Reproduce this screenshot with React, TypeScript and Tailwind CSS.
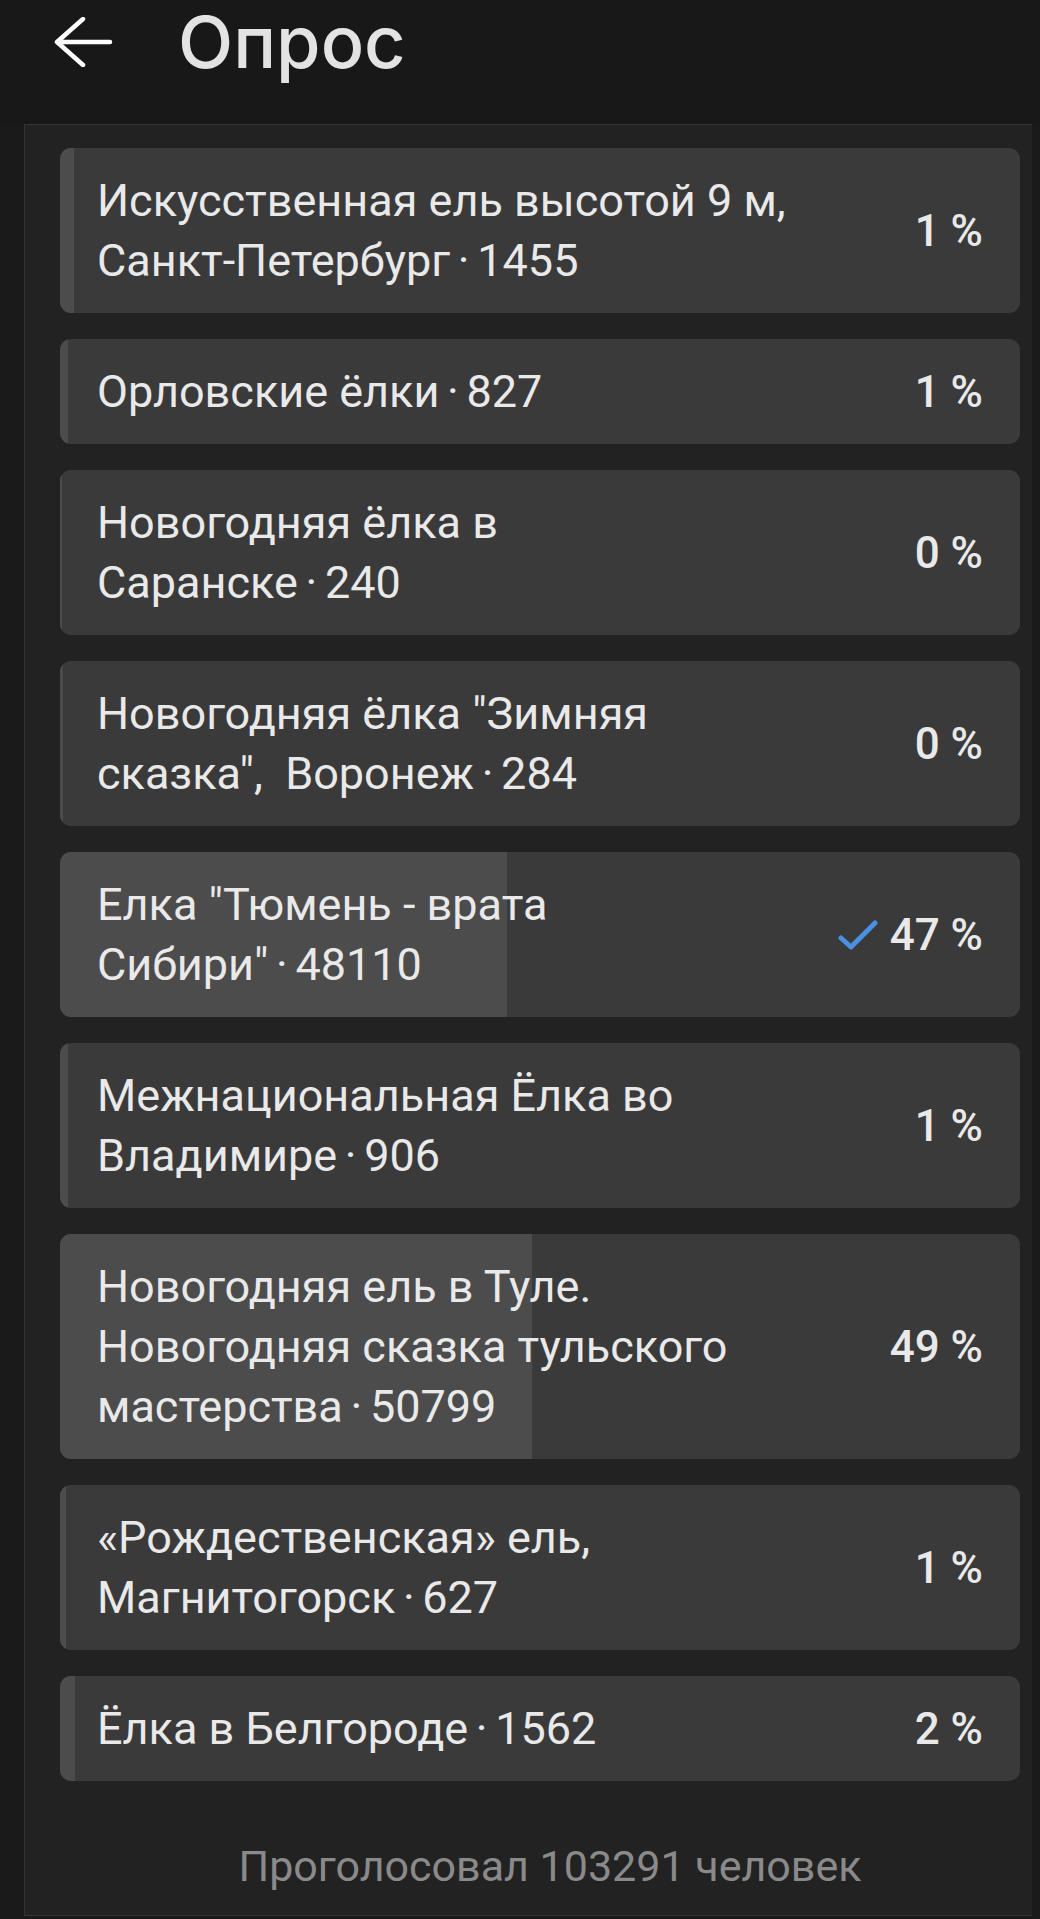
import React from 'react';

type Option = {
  lines: string[];
  votes: number;
  mine?: boolean;
};

const TOTAL = 103291;
// narrow spaces round the middle dot, as the app renders them
const SEP = '\u2006·\u2006';

const options: Option[] = [
  { lines: ['Искусственная ель высотой 9 м,', `Санкт-Петербург${SEP}1455`], votes: 1455 },
  { lines: [`Орловские ёлки${SEP}827`], votes: 827 },
  { lines: ['Новогодняя ёлка в', `Саранске${SEP}240`], votes: 240 },
  { lines: ['Новогодняя ёлка "Зимняя', `сказка",  Воронеж${SEP}284`], votes: 284 },
  { lines: ['Елка "Тюмень - врата', `Сибири"${SEP}48110`], votes: 48110, mine: true },
  { lines: ['Межнациональная Ёлка во', `Владимире${SEP}906`], votes: 906 },
  {
    lines: ['Новогодняя ель в Туле.', 'Новогодняя сказка тульского', `мастерства${SEP}50799`],
    votes: 50799,
  },
  { lines: ['«Рождественская» ель,', `Магнитогорск${SEP}627`], votes: 627 },
  { lines: [`Ёлка в Белгороде${SEP}1562`], votes: 1562 },
];

function CheckMark() {
  return (
    <svg width="40" height="32" viewBox="0 0 40 32" fill="none" className="mr-[12px]">
      <path
        d="M3 19 L13 28 L37 4"
        stroke="#4a8fe0"
        strokeWidth={5}
        strokeLinecap="round"
        strokeLinejoin="round"
      />
    </svg>
  );
}

function PollOption({ opt }: { opt: Option }) {
  const share = (opt.votes / TOTAL) * 100;
  const pct = Math.round(share);
  return (
    <div className="relative overflow-hidden rounded-[11px] bg-[#3a3a3a]">
      <div className="absolute inset-y-0 left-0 bg-[#4c4c4c]" style={{ width: `${share}%` }} />
      <div className="relative flex items-center justify-between pl-[37px] pr-[37px] pt-[23px] pb-[22px]">
        <div className="text-[45px] leading-[60px] text-[#e9e9e9]">
          {opt.lines.map((l, i) => (
            <div key={i} className="whitespace-pre">
              {l}
            </div>
          ))}
        </div>
        <div className="flex items-center text-[44px] leading-[60px] font-medium text-[#e9e9e9]">
          {opt.mine && <CheckMark />}
          <span>{pct} %</span>
        </div>
      </div>
    </div>
  );
}

export default function App() {
  return (
    <div
      className="w-[1040px] h-[1919px] overflow-hidden bg-[#1a1a1a]"
      style={{ fontFamily: 'Roboto, "Noto Sans", sans-serif' }}
    >
      {/* top bar */}
      <div className="h-[124px] bg-[#181818]">
        <div className="flex items-center h-[84px]">
          <svg width="60" height="50" viewBox="0 0 60 50" fill="none" className="ml-[54px]">
            <path
              d="M3 25 H56 M29 2 L3 25 L29 48"
              stroke="#ffffff"
              strokeWidth={4.5}
              strokeLinecap="round"
              strokeLinejoin="round"
            />
          </svg>
          <h1
            className="ml-[64px] text-[72px] leading-[84px] font-medium text-[#e3e3e3]"
            style={{ fontFamily: 'Inter, "Noto Sans", sans-serif' }}
          >
            Опрос
          </h1>
        </div>
      </div>

      {/* poll panel */}
      <div className="ml-[24px] mr-[8px] border-l border-t border-b border-[#333333] bg-[#222222] pt-[23px] pl-[35px] pr-[12px] pb-[19px]">
        <div className="flex flex-col gap-[26px]">
          {options.map((o, i) => (
            <PollOption key={i} opt={o} />
          ))}
        </div>
        <div className="mt-[55px] pl-[20px] text-center text-[43px] leading-[60px] text-[#8a8a8a]">
          Проголосовал 103291 человек
        </div>
      </div>
    </div>
  );
}
